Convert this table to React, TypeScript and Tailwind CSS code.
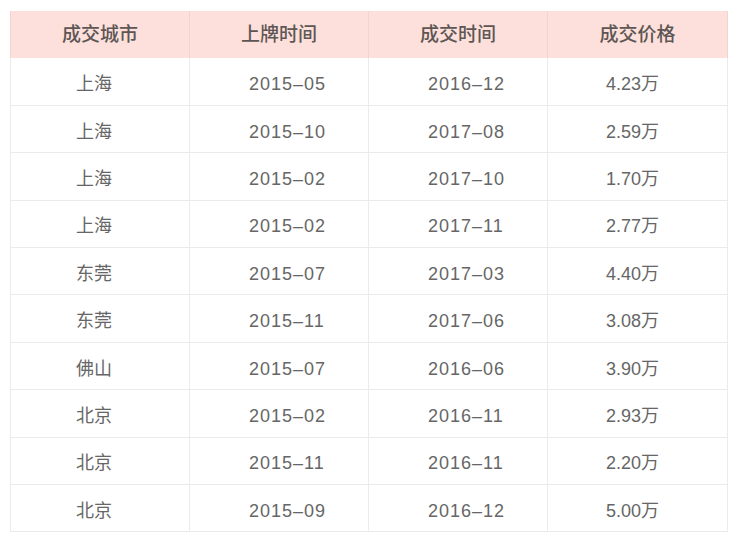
import React from "react";

const rows = [
  { city: "上海", listed: "2015–05", sold: "2016–12", price: "4.23万" },
  { city: "上海", listed: "2015–10", sold: "2017–08", price: "2.59万" },
  { city: "上海", listed: "2015–02", sold: "2017–10", price: "1.70万" },
  { city: "上海", listed: "2015–02", sold: "2017–11", price: "2.77万" },
  { city: "东莞", listed: "2015–07", sold: "2017–03", price: "4.40万" },
  { city: "东莞", listed: "2015–11", sold: "2017–06", price: "3.08万" },
  { city: "佛山", listed: "2015–07", sold: "2016–06", price: "3.90万" },
  { city: "北京", listed: "2015–02", sold: "2016–11", price: "2.93万" },
  { city: "北京", listed: "2015–11", sold: "2016–11", price: "2.20万" },
  { city: "北京", listed: "2015–09", sold: "2016–12", price: "5.00万" },
];

const headers = ["成交城市", "上牌时间", "成交时间", "成交价格"];

const App: React.FC = () => {
  return (
    <div
      className="w-[740px] h-[543px] bg-white pt-[11px] pl-[10px]"
      style={{ fontFamily: '"Liberation Sans", "Noto Sans CJK SC", sans-serif' }}
    >
      <table className="table-fixed border-collapse w-[717px]">
        <colgroup>
          <col className="w-[179px]" />
          <col className="w-[179px]" />
          <col className="w-[179px]" />
          <col className="w-[180px]" />
        </colgroup>
        <thead>
          <tr className="bg-[#fde0db] h-[47px]">
            {headers.map((h) => (
              <th
                key={h}
                className="border-x border-[#f3d3cd] text-center text-[19px] font-medium text-[#5e5654] p-0 pt-[1px]"
              >
                {h}
              </th>
            ))}
          </tr>
        </thead>
        <tbody className="text-[18px] text-[#666]">
          {rows.map((r, i) => (
            <tr key={i} className="h-[47.4px] border-b border-[#ebebeb]">
              <td className="border-x border-[#ebebeb] p-0 pl-[65px] pt-[6px]">{r.city}</td>
              <td className="border-x border-[#ebebeb] p-0 pl-[59px] pt-[6px] tracking-[1px]">{r.listed}</td>
              <td className="border-x border-[#ebebeb] p-0 pl-[59px] pt-[6px] tracking-[1px]">{r.sold}</td>
              <td className="border-x border-[#ebebeb] p-0 pl-[58px] pt-[6px]">{r.price}</td>
            </tr>
          ))}
        </tbody>
      </table>
    </div>
  );
};

export default App;
